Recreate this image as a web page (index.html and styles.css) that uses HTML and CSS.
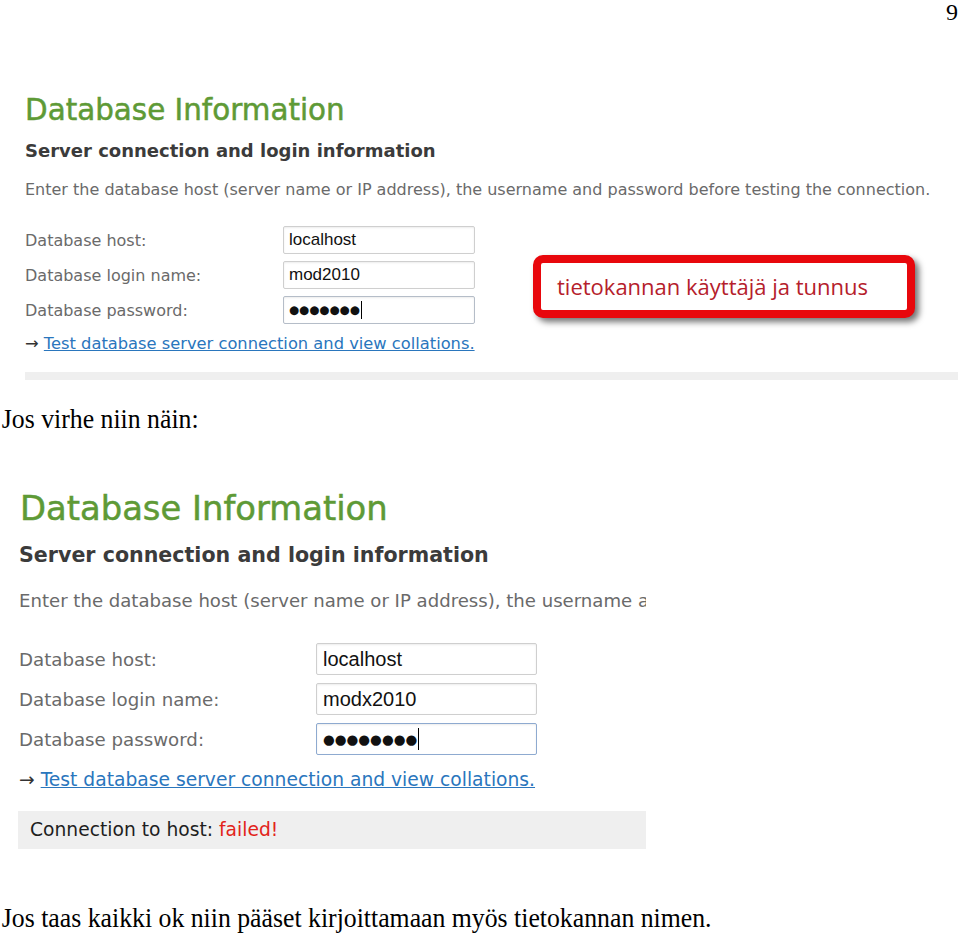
FILE: index.html
```html
<!DOCTYPE html>
<html lang="fi">
<head>
    <meta charset="UTF-8">
    <meta name="viewport" content="width=device-width, initial-scale=1.0">
    <title>Database Information</title>
    <link rel="stylesheet" href="styles.css">
</head>
<body>
    <div class="page-num">9</div>

    <section class="shot shot-a">
        <h1>Database Information</h1>
        <h2>Server connection and login information</h2>
        <p class="intro">Enter the database host (server name or IP address), the username and password before testing the connection.</p>
        <div class="fields">
            <div class="row">
                <span class="label">Database host:</span>
                <span class="field">localhost</span>
            </div>
            <div class="row">
                <span class="label">Database login name:</span>
                <span class="field">mod2010</span>
            </div>
            <div class="row">
                <span class="label">Database password:</span>
                <span class="field field-pass">&#9679;&#9679;&#9679;&#9679;&#9679;&#9679;&#9679;<i class="caret"></i></span>
            </div>
        </div>
        <p class="test"><span class="arrow">&rarr;</span> <a href="#">Test database server connection and view collations.</a></p>
        <div class="bar"></div>
        <div class="callout">tietokannan käyttäjä ja tunnus</div>
    </section>

    <p class="doc-text first">Jos virhe niin näin:</p>

    <section class="shot shot-b">
        <h1>Database Information</h1>
        <h2>Server connection and login information</h2>
        <p class="intro">Enter the database host (server name or IP address), the username and password before testing the connection.</p>
        <div class="fields">
            <div class="row">
                <span class="label">Database host:</span>
                <span class="field">localhost</span>
            </div>
            <div class="row">
                <span class="label">Database login name:</span>
                <span class="field">modx2010</span>
            </div>
            <div class="row">
                <span class="label">Database password:</span>
                <span class="field field-pass focus">&#9679;&#9679;&#9679;&#9679;&#9679;&#9679;&#9679;&#9679;<i class="caret"></i></span>
            </div>
        </div>
        <p class="test"><span class="arrow">&rarr;</span> <a href="#">Test database server connection and view collations.</a></p>
        <div class="status">Connection to host: <span class="failed">failed!</span></div>
    </section>

    <p class="doc-text last">Jos taas kaikki ok niin pääset kirjoittamaan myös tietokannan nimen.</p>
</body>
</html>
```

FILE: styles.css
```css
body {
    margin: 0;
    font-family: 'Liberation Serif', 'Times New Roman', serif;
    color: #000;
    background-color: #fff;
}

.page-num {
    font-size: 24px;
    line-height: 24px;
    height: 24px;
    text-align: right;
    padding-right: 2px;
}

.doc-text {
    font-size: 28px;
    line-height: 30px;
    margin: 0;
    padding-left: 2px;
    white-space: nowrap;
    transform: scaleX(0.92);
    transform-origin: left center;
}

.doc-text.first {
    margin-top: 24px;
}

.doc-text.last {
    margin-top: 54px;
}

/* screenshot blocks */
.shot {
    font-family: 'DejaVu Sans', Verdana, sans-serif;
    position: relative;
}

.shot h1 {
    margin: 0;
    font-weight: normal;
    color: #5e9a36;
    -webkit-text-stroke: 0.5px #5e9a36;
}

.shot h2 {
    margin: 0;
    font-weight: bold;
    color: #3b3b3b;
}

.shot .intro {
    margin: 0;
    color: #6a6a6a;
    white-space: nowrap;
}

.fields {
    display: flex;
    flex-direction: column;
}

.row {
    display: flex;
    align-items: center;
}

.label {
    color: #6a6a6a;
}

.field {
    box-sizing: border-box;
    background-color: #fff;
    border: 1px solid #cfcfcf;
    border-radius: 2px;
    box-shadow: inset 0 1px 2px rgba(0, 0, 0, 0.08);
    font-family: 'Liberation Sans', Arial, sans-serif;
    color: #111;
    display: flex;
    align-items: center;
}

.field-pass {
    font-family: 'DejaVu Sans', sans-serif;
}

.caret {
    display: inline-block;
    width: 1px;
    background-color: #000;
    margin-left: 1px;
}

.test {
    margin: 0;
    color: #333;
    white-space: nowrap;
}

.test a {
    color: #2a76bd;
    text-decoration: underline;
}

/* first screenshot */
.shot-a {
    margin-left: 25px;
    width: 933px;
    padding-top: 69px;
}

.shot-a h1 {
    font-size: 29.4px;
    line-height: 34px;
}

.shot-a h2 {
    font-size: 18px;
    line-height: 22px;
    margin-top: 13px;
}

.shot-a .intro {
    font-size: 16px;
    line-height: 20px;
    margin-top: 18px;
}

.shot-a .fields {
    margin-top: 26px;
    gap: 7px;
}

.shot-a .label {
    width: 258px;
    font-size: 16px;
}

.shot-a .field {
    width: 192px;
    height: 28px;
    padding-left: 5px;
    font-size: 17px;
}

.shot-a .field-pass {
    font-size: 11.6px;
    border-color: #b5bdc8;
}

.shot-a .caret {
    height: 18px;
}

.shot-a .test {
    font-size: 16.3px;
    line-height: 20px;
    margin-top: 10px;
}

.bar {
    height: 8px;
    margin-top: 18px;
    background-color: #efefef;
}

.callout {
    position: absolute;
    left: 508px;
    top: 231px;
    width: 350px;
    height: 47px;
    border: 8px solid #e8070c;
    border-radius: 10px;
    background-color: #fff;
    box-shadow: 4px 4px 6px rgba(0, 0, 0, 0.55);
    font-family: 'Open Sans', sans-serif;
    font-size: 22px;
    line-height: 47px;
    color: #b5202b;
    padding-left: 16px;
    white-space: nowrap;
}

/* second screenshot */
.shot-b {
    margin-left: 18px;
    width: 628px;
    overflow: hidden;
    margin-top: 56px;
}

.shot-b h1 {
    font-size: 33.8px;
    line-height: 38px;
    padding-left: 2px;
}

.shot-b h2 {
    font-size: 20.6px;
    line-height: 24px;
    margin-top: 15px;
    padding-left: 1px;
}

.shot-b .intro {
    font-size: 18.1px;
    line-height: 22px;
    margin-top: 23px;
    padding-left: 1px;
}

.shot-b .fields {
    margin-top: 31px;
    gap: 8px;
    padding-left: 1px;
}

.shot-b .label {
    width: 297px;
    font-size: 18.2px;
}

.shot-b .field {
    width: 221px;
    height: 32px;
    padding-left: 6px;
    font-size: 20px;
}

.shot-b .field-pass {
    font-size: 13.5px;
}

.shot-b .field.focus {
    border-color: #8eaad0;
}

.shot-b .caret {
    height: 22px;
}

.shot-b .test {
    font-size: 18.7px;
    line-height: 22px;
    margin-top: 14px;
    padding-left: 1px;
}

.status {
    margin-top: 20px;
    height: 38px;
    line-height: 38px;
    padding-left: 12px;
    background-color: #efefef;
    font-size: 18.7px;
    color: #1e1e1e;
}

.failed {
    color: #e2231a;
}
```
